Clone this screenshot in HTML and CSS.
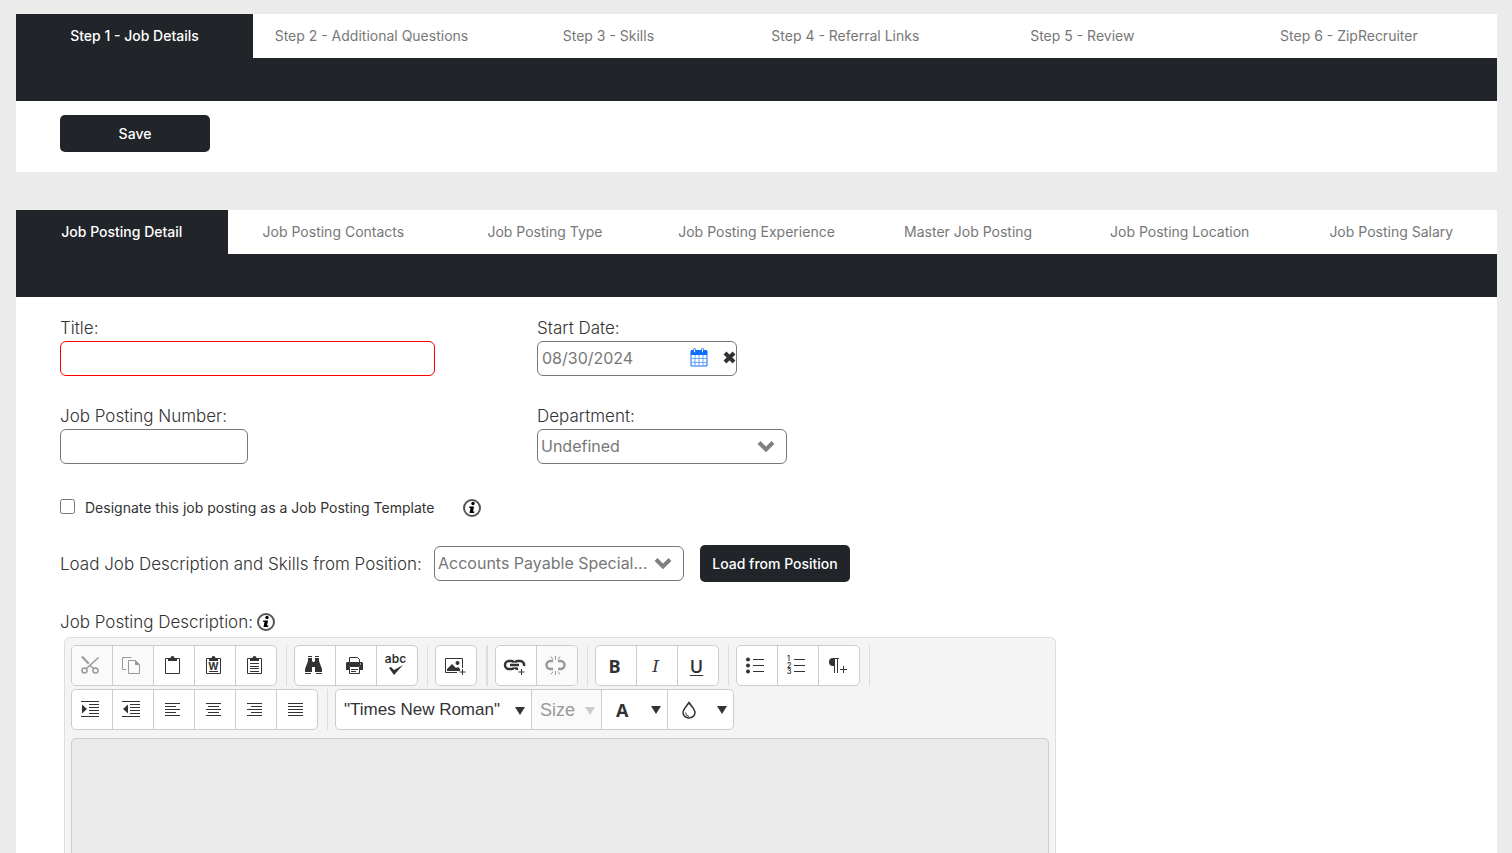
FILE: index.html
```html
<!DOCTYPE html>
<html lang="en">

<head>
    <title>Job Posting</title>
    <meta charset="utf-8">
    <meta name="viewport" content="width=device-width, initial-scale=1.0">
    <link rel="stylesheet" href="styles.css">
</head>

<body>

    <section class="panel">
        <nav class="tabs steps">
            <a class="tab active" href="#">Step 1 - Job Details</a>
            <a class="tab" href="#">Step 2 - Additional Questions</a>
            <a class="tab" href="#">Step 3 - Skills</a>
            <a class="tab" href="#">Step 4 - Referral Links</a>
            <a class="tab" href="#">Step 5 - Review</a>
            <a class="tab" href="#">Step 6 - ZipRecruiter</a>
        </nav>
        <div class="bar"></div>
        <div class="actions">
            <button class="btn" type="button">Save</button>
        </div>
    </section>

    <section class="panel detail">
        <nav class="tabs">
            <a class="tab active" href="#">Job Posting Detail</a>
            <a class="tab" href="#">Job Posting Contacts</a>
            <a class="tab" href="#">Job Posting Type</a>
            <a class="tab" href="#">Job Posting Experience</a>
            <a class="tab" href="#">Master Job Posting</a>
            <a class="tab" href="#">Job Posting Location</a>
            <a class="tab" href="#">Job Posting Salary</a>
        </nav>
        <div class="bar"></div>

        <form class="form">
            <div class="fields">
                <div class="field">
                    <label for="title">Title:</label>
                    <input class="box required" type="text" id="title">
                </div>
                <div class="field">
                    <label for="start">Start Date:</label>
                    <div class="box date">
                        <input type="text" id="start" value="08/30/2024">
                        <button class="plain" type="button" aria-label="Pick a date">
                            <svg width="18" height="20" viewBox="0 0 18 20">
                                <path d="M1 3h16v15H1z" fill="#fff" stroke="#0d6efd" />
                                <path d="M1 2h16v5H1z" fill="#0d6efd" />
                                <path d="M5 7v11M9 7v11M13 7v11M1 10.500h16M1 14.500h16" stroke="#6aa3f8" />
                                <rect x="3.500" y=".500" width="2" height="4" rx="1" fill="#fff" stroke="#0d6efd" />
                                <rect x="11.500" y=".500" width="2" height="4" rx="1" fill="#fff" stroke="#0d6efd" />
                            </svg>
                        </button>
                        <button class="plain clear" type="button" aria-label="Clear date">
                            <svg width="13" height="14" viewBox="0 0 13 14">
                                <path d="M2 2l9 9M11 2l-9 9" stroke="#333" stroke-width="4" />
                            </svg>
                        </button>
                    </div>
                </div>
                <div class="field">
                    <label for="number">Job Posting Number:</label>
                    <input class="box short" type="text" id="number">
                </div>
                <div class="field">
                    <label for="department">Department:</label>
                    <div class="select">
                        <select class="box" id="department">
                            <option>Undefined</option>
                        </select>
                        <svg class="chevron" width="18" height="13" viewBox="0 0 18 13">
                            <path d="M2 2.500l7 7 7-7" fill="none" stroke="#808080" stroke-width="4" />
                        </svg>
                    </div>
                </div>
            </div>

            <div class="template">
                <input type="checkbox" id="template">
                <label for="template">Designate this job posting as a Job Posting Template</label>
                <svg class="info" width="18" height="20" viewBox="0 0 18 20">
                    <circle cx="9" cy="10" r="8" fill="#fff" stroke="#555" stroke-width="2" />
                    <circle cx="10" cy="5.500" r="1.700" />
                    <path d="M6.500 8.500h4.500l-1 5h1.500l-.5 1.500H6.500l1-5H6z" />
                </svg>
            </div>

            <div class="load">
                <label for="position">Load Job Description and Skills from Position:</label>
                <div class="select">
                    <select class="box" id="position">
                        <option>Accounts Payable Special...</option>
                    </select>
                    <svg class="chevron" width="18" height="13" viewBox="0 0 18 13">
                        <path d="M2 2.500l7 7 7-7" fill="none" stroke="#808080" stroke-width="4" />
                    </svg>
                </div>
                <button class="btn" type="button">Load from Position</button>
            </div>

            <div class="description">
                <span id="description">Job Posting Description:</span>
                <svg class="info" width="18" height="20" viewBox="0 0 18 20">
                    <circle cx="9" cy="10" r="8" fill="#fff" stroke="#555" stroke-width="2" />
                    <circle cx="10" cy="5.500" r="1.700" />
                    <path d="M6.500 8.500h4.500l-1 5h1.500l-.5 1.500H6.500l1-5H6z" />
                </svg>
            </div>

            <div class="editor">
                <div class="toolbar">
                    <div class="group">
                        <button type="button" disabled aria-label="Cut">
                            <svg class="icon" viewBox="0 0 19 19">
                                <circle cx="3.500" cy="14.500" r="2.500" class="scissor" />
                                <circle cx="14.500" cy="14.500" r="2.500" class="scissor" />
                                <path d="M5.500 12.500L17.500 1.500M12.500 12.500L8.500 9" class="scissor" />
                                <path d="M0 1l2-1 6.500 7L7 8.500z" />
                            </svg>
                        </button>
                        <button type="button" disabled aria-label="Copy">
                            <svg class="icon" viewBox="0 0 19 19">
                                <path d="M9.500 1.500h-9v12H4M6.500 4.500h7l4 4v9h-11z" class="line" />
                                <path d="M13 4l5 5h-5z" />
                            </svg>
                        </button>
                        <button type="button" aria-label="Paste">
                            <svg class="icon" viewBox="0 0 19 19">
                                <path d="M2.500 2.500h14v15h-14z" class="line" />
                                <path d="M5 2h2.500a2 2 0 0 1 4 0H14v3H5z" />
                            </svg>
                        </button>
                        <button type="button" aria-label="Paste from Word">
                            <svg class="icon" viewBox="0 0 19 19">
                                <path d="M2.500 2.500h14v15h-14zM5 15.500h9" class="line" />
                                <path d="M5 2h2.500a2 2 0 0 1 4 0H14v3H5z" />
                                <text x="9.500" y="13.500" class="word">W</text>
                            </svg>
                        </button>
                        <button type="button" aria-label="Paste plain text">
                            <svg class="icon" viewBox="0 0 19 19">
                                <path d="M2.500 2.500h14v15h-14zM5 7.500h9M5 10.500h9M5 12.500h9M5 15.500h9" class="line" />
                                <path d="M5 2h2.500a2 2 0 0 1 4 0H14v3H5z" />
                            </svg>
                        </button>
                    </div>
                    <span class="sep"></span>
                    <div class="group">
                        <button type="button" aria-label="Find">
                            <svg class="icon" viewBox="0 0 19 19">
                                <path d="M4 2h4v3l1 1h1l1-1V2h4v3l3 8v3h-7v-5H8v5H1v-3l3-8zM4 0h4v1H4zM11 0h4v1h-4zM1 17h6v1H1zM12 17h6v1h-6z" />
                            </svg>
                        </button>
                        <button type="button" aria-label="Print">
                            <svg class="icon" viewBox="0 0 19 19">
                                <path d="M4.500 6V1.500h8l2 2V6M4.500 10.500h10v7h-10zM6 13.500h7M6 15.500h5" class="line" />
                                <path d="M2 6h15l1 1v7h-3v-4H4v4H1V7z" />
                                <path d="M15 8h1" stroke="#fff" />
                            </svg>
                        </button>
                        <button type="button" aria-label="Spell check">
                            <svg class="icon" viewBox="0 0 19 19">
                                <text x="9.500" y="7" class="abc">abc</text>
                                <path d="M3 12l2-1 3 3 9-5-9 10z" />
                            </svg>
                        </button>
                    </div>
                    <span class="sep"></span>
                    <div class="group">
                        <button type="button" aria-label="Insert image">
                            <svg class="icon" viewBox="0 0 19 19">
                                <path d="M12 16.500H.500v-14h17V12M17.500 13v6M14.500 16h6" class="line" />
                                <path d="M2 15v-2l5-5 4 4 2-1 2 2v2z" />
                                <circle cx="12.500" cy="7" r="2" />
                            </svg>
                        </button>
                    </div>
                    <span class="sep double"></span>
                    <div class="group">
                        <button type="button" aria-label="Insert link">
                            <svg class="icon" viewBox="0 0 19 19">
                                <path d="M9 6.500A3 3 0 0 0 6 5H4a4 4 0 0 0 0 8h2a3 3 0 0 0 3-1.500M10 6.500A3 3 0 0 1 13 5h2a4 4 0 0 1 4 5M10 11.500q1 1.500 3 1.500M5 9h9" class="thick" />
                                <path d="M16.500 13v6M13.500 16h6" class="line" />
                            </svg>
                        </button>
                        <button type="button" disabled aria-label="Remove link">
                            <svg class="icon" viewBox="0 0 19 19">
                                <path d="M7 5H4.500a4 4 0 0 0 0 8H7M12 5h2.500a4 4 0 0 1 0 8H12" class="thick" />
                                <path d="M9.500 0v4M5 .500l2 3M14 .500l-2 3M9.500 15v4M5 18.500l2-3M14 18.500l-2-3" class="line" />
                            </svg>
                        </button>
                    </div>
                    <span class="sep"></span>
                    <div class="group">
                        <button class="bold" type="button">B</button>
                        <button class="italic" type="button">I</button>
                        <button class="underline" type="button">U</button>
                    </div>
                    <span class="sep"></span>
                    <div class="group">
                        <button type="button" aria-label="Bulleted list">
                            <svg class="icon" viewBox="0 0 19 19">
                                <circle cx="2" cy="3.500" r="2" />
                                <circle cx="2" cy="9.500" r="2" />
                                <circle cx="2" cy="15.500" r="2" />
                                <path d="M7 3.500h11M7 9.500h11M7 15.500h11" class="line" />
                            </svg>
                        </button>
                        <button type="button" aria-label="Numbered list">
                            <svg class="icon" viewBox="0 0 19 19">
                                <text x="0" y="5" class="num">1</text>
                                <text x="0" y="12" class="num">2</text>
                                <text x="0" y="18" class="num">3</text>
                                <path d="M7 3.500h11M7 9.500h11M7 15.500h11" class="line" />
                            </svg>
                        </button>
                        <button type="button" aria-label="New paragraph">
                            <svg class="icon" viewBox="0 0 19 19">
                                <path d="M5 2h6v1h-1v14H9V3H7v14H6v-7H5a4 4 0 0 1 0-8z" />
                                <path d="M15.500 10v7M12 13.500h7" class="line" />
                            </svg>
                        </button>
                    </div>
                    <span class="sep"></span>
                </div>

                <div class="toolbar">
                    <div class="group">
                        <button type="button" aria-label="Indent">
                            <svg class="icon" viewBox="0 0 19 19">
                                <path d="M0 1.500h18M8 4.500h10M8 7.500h10M8 10.500h10M8 13.500h10M0 16.500h18" class="line" />
                                <path d="M1 4.500l5 4.500-5 4.500z" />
                            </svg>
                        </button>
                        <button type="button" aria-label="Outdent">
                            <svg class="icon" viewBox="0 0 19 19">
                                <path d="M0 1.500h18M8 4.500h10M8 7.500h10M8 10.500h10M8 13.500h10M0 16.500h18" class="line" />
                                <path d="M6 4.500L1 9l5 4.500z" />
                            </svg>
                        </button>
                        <button type="button" aria-label="Align left">
                            <svg class="icon" viewBox="0 0 19 19">
                                <path d="M2 3.500h15M2 6.500h11M2 9.500h15M2 12.500h11M2 15.500h15" class="line" />
                            </svg>
                        </button>
                        <button type="button" aria-label="Align center">
                            <svg class="icon" viewBox="0 0 19 19">
                                <path d="M2 3.500h15M4 6.500h11M2 9.500h15M4 12.500h11M2 15.500h15" class="line" />
                            </svg>
                        </button>
                        <button type="button" aria-label="Align right">
                            <svg class="icon" viewBox="0 0 19 19">
                                <path d="M2 3.500h15M6 6.500h11M2 9.500h15M6 12.500h11M2 15.500h15" class="line" />
                            </svg>
                        </button>
                        <button type="button" aria-label="Justify">
                            <svg class="icon" viewBox="0 0 19 19">
                                <path d="M2 3.500h15M2 6.500h15M2 9.500h15M2 12.500h15M2 15.500h15" class="line" />
                            </svg>
                        </button>
                    </div>
                    <span class="sep"></span>
                    <div class="group">
                        <div class="pick font">
                            <select aria-label="Font">
                                <option>"Times New Roman"</option>
                            </select>
                            <svg class="arrow" viewBox="0 0 10 8"><path d="M0 0h10L5 8z" /></svg>
                        </div>
                        <div class="pick size">
                            <select aria-label="Size" disabled>
                                <option>Size</option>
                            </select>
                            <svg class="arrow" viewBox="0 0 10 8"><path d="M0 0h10L5 8z" /></svg>
                        </div>
                        <button class="color bold" type="button">A
                            <svg class="arrow" viewBox="0 0 10 8"><path d="M0 0h10L5 8z" /></svg>
                        </button>
                        <button class="color" type="button" aria-label="Background color">
                            <svg class="drop" viewBox="0 0 14 18">
                                <path d="M7 1.500C4 6 1 8.500 1 11.500a6 5.500 0 0 0 12 0C13 8.500 10 6 7 1.500z" class="scissor" />
                                <path d="M3.500 11.500q.500 3.500 3.500 4" class="line" />
                            </svg>
                            <svg class="arrow" viewBox="0 0 10 8"><path d="M0 0h10L5 8z" /></svg>
                        </button>
                    </div>
                </div>

                <div class="content" contenteditable="true" role="textbox" aria-labelledby="description"></div>
            </div>
        </form>
    </section>

</body>

</html>
```
FILE: styles.css
```css
* {
    box-sizing: border-box;
}

body {
    display: flex;
    flex-direction: column;
    gap: 38px;
    height: 100vh;
    margin: 0;
    padding: 14px 15px 0 16px;
    overflow: hidden;
    background: #ebebeb;
    color: #333;
    font-family: Inter, sans-serif;
    font-size: 17px;
    font-weight: 300;
    line-height: 20px;
}

input,
select,
button {
    font: inherit;
    color: inherit;
}

.panel {
    background: #fff;
}

.detail {
    display: flex;
    flex-direction: column;
    flex: 1;
}

/* tabs */
.tabs {
    display: flex;
}

.tab {
    flex: 1;
    padding: 12px 0;
    color: #777;
    font-size: 14px;
    font-weight: 400;
    text-align: center;
    text-decoration: none;
    white-space: nowrap;
}

.steps .tab {
    flex: 0 0 16%;
}

.steps .tab:last-child {
    flex: 1;
}

.tab.active {
    background: #212529;
    color: #fff;
    font-weight: 500;
}

.bar {
    height: 43px;
    background: #212529;
}

.actions {
    padding: 14px 44px 20px;
}

.btn {
    display: block;
    width: 150px;
    height: 37px;
    padding: 0;
    border: 0;
    border-radius: 5px;
    background: #212529;
    color: #fff;
    font-size: 14px;
    font-weight: 500;
}

/* form */
.form {
    display: flex;
    flex-direction: column;
    flex: 1;
    padding: 21px 44px 0;
}

.fields {
    display: grid;
    grid-template-columns: 477px 1fr;
    row-gap: 30px;
}

.field {
    display: flex;
    flex-direction: column;
    gap: 3px;
}

.box {
    width: 250px;
    height: 35px;
    padding: 0 4px 1px;
    border: 1px solid #777;
    border-radius: 6px;
    background: #fff;
    color: #777;
    font-size: 16px;
    font-weight: 400;
}

.required {
    width: 375px;
    border-color: #f00;
}

.short {
    width: 188px;
}

.date {
    display: flex;
    align-items: center;
    width: 200px;
    padding-right: 0;
}

.date input {
    flex: 1;
    min-width: 0;
    padding: 0;
    border: 0;
    background: none;
}

.plain {
    display: flex;
    padding: 0;
    border: 0;
    background: none;
}

.clear {
    margin-left: 15px;
}

.select {
    position: relative;
    width: 250px;
}

select {
    appearance: none;
}

.select .box {
    display: block;
    padding-left: 3px;
}

.chevron {
    position: absolute;
    top: 11px;
    right: 12px;
    pointer-events: none;
}

.template {
    display: flex;
    align-items: center;
    margin-top: 34px;
    font-size: 14px;
    font-weight: 400;
}

.template input {
    width: 15px;
    height: 15px;
    margin: 0 10px 4px 0;
}

.template label {
    min-width: 361px;
}

.template .info {
    margin-left: 17px;
}

.load {
    display: flex;
    align-items: center;
    margin-top: 27px;
}

.load label {
    min-width: 366px;
}

.load .select {
    margin: 0 16px 0 8px;
}

.description {
    display: flex;
    align-items: center;
    gap: 4px;
    margin-top: 30px;
}

#description {
    min-width: 193px;
}

/* editor */
.editor {
    display: flex;
    flex-direction: column;
    flex: 1;
    gap: 3px;
    width: 992px;
    margin: 5px 0 0 4px;
    padding: 7px 6px 0;
    border: 1px solid #ddd;
    border-bottom: 0;
    border-radius: 6px 6px 0 0;
    background: #f4f4f4;
    font-family: "Liberation Sans", Arial, sans-serif;
    font-size: 18px;
}

.toolbar {
    display: flex;
    height: 41px;
}

.group {
    display: flex;
    border: 1px solid #ccc;
    border-radius: 5px;
    background: #fff;
    overflow: hidden;
}

.group > * {
    border: 0;
    border-left: 1px solid #ccc;
}

.group > :first-child {
    border-left: 0;
}

.group button {
    display: flex;
    align-items: center;
    justify-content: center;
    width: 41px;
    padding: 0 3px 0 0;
    background: none;
}

.group button:first-child {
    width: 40px;
}

.group button:disabled,
.size {
    background: #fafafa;
    color: #999;
}

.sep {
    width: 1px;
    margin: 0 7px 0 9px;
    background: #ddd;
}

.double {
    width: 2px;
}

.icon {
    width: 19px;
    height: 19px;
    fill: currentColor;
    overflow: visible;
}

.line,
.scissor {
    fill: none;
    stroke: currentColor;
}

.scissor {
    stroke-width: 1.5;
}

.thick {
    fill: none;
    stroke: currentColor;
    stroke-width: 2.5;
}

.icon text {
    font-family: Inter, sans-serif;
    font-weight: 600;
}

.icon .word {
    font-size: 10px;
    font-weight: 700;
    text-anchor: middle;
}

.abc {
    font-size: 12px;
    text-anchor: middle;
}

.icon .num {
    font-size: 7px;
}

.group .bold {
    font-family: "Open Sans", sans-serif;
    font-weight: 700;
}

.group .italic {
    font-family: "DejaVu Serif", serif;
    font-size: 17px;
    font-style: italic;
    font-weight: 400;
}

.group .underline {
    font-family: "Open Sans", sans-serif;
    font-weight: 600;
    text-decoration: underline;
    text-underline-offset: 2px;
}

.pick {
    position: relative;
    display: flex;
    font-weight: 400;
}

.pick select {
    width: 100%;
    padding: 0 0 0 8px;
    border: 0;
    background: none;
    opacity: 1;
}

.font {
    width: 195px;
}

.font select {
    font-size: 17px;
}

.size {
    width: 70px;
}

.arrow {
    width: 10px;
    height: 8px;
    fill: currentColor;
}

.pick .arrow {
    position: absolute;
    top: 17px;
    right: 6px;
    pointer-events: none;
}

.size .arrow {
    fill: #ccc;
}

.group .color {
    justify-content: space-between;
    width: 66px;
    padding: 0 6px 0 14px;
}

.drop {
    width: 14px;
    height: 18px;
}

.content {
    flex: 1;
    margin-top: 5px;
    border: 1px solid #ccc;
    border-bottom: 0;
    border-radius: 5px 5px 0 0;
    background: #eaeaea;
}
```
